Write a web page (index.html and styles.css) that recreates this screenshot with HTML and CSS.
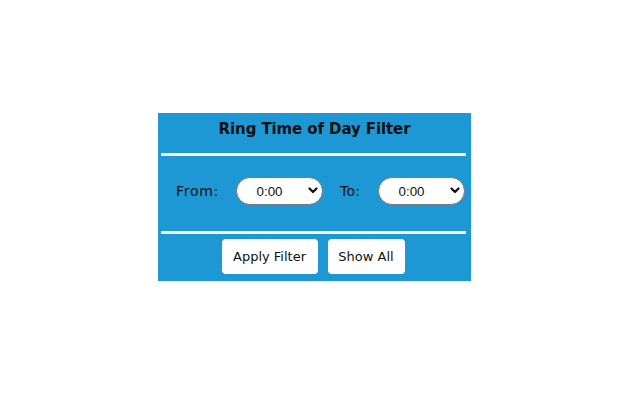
FILE: index.html
```html
<!DOCTYPE html>
<html>
<head>
<meta charset="utf-8">
<link rel="stylesheet" href="styles.css">
</head>
<body>
<div class="page">
  <div class="panel">
    <div class="title">Ring Time of Day Filter</div>
    <div class="rule"></div>
    <div class="row">
      <label class="lbl lbl-from">From:</label>
      <span class="sel-wrap">
        <select class="sel"><option>0:00</option></select>
        <svg class="chev" width="10" height="7" viewBox="0 0 10 7"><path d="M1.5 1.5 L5 5 L8.5 1.5" fill="none" stroke="#111" stroke-width="2.2" stroke-linecap="round" stroke-linejoin="round"/></svg>
      </span>
      <label class="lbl lbl-to">To:</label>
      <span class="sel-wrap">
        <select class="sel"><option>0:00</option></select>
        <svg class="chev" width="10" height="7" viewBox="0 0 10 7"><path d="M1.5 1.5 L5 5 L8.5 1.5" fill="none" stroke="#111" stroke-width="2.2" stroke-linecap="round" stroke-linejoin="round"/></svg>
      </span>
    </div>
    <div class="rule"></div>
    <div class="buttons">
      <button class="btn btn-apply">Apply Filter</button>
      <button class="btn btn-all">Show All</button>
    </div>
  </div>
</div>
</body>
</html>
```

FILE: styles.css
```css
html, body {
  margin: 0;
  padding: 0;
  background: #ffffff;
}

.page {
  padding: 113px 0 0 158px;
}

.panel {
  width: 313px;
  height: 168px;
  box-sizing: border-box;
  background: #1e97d5;
  font-family: "DejaVu Sans", Verdana, sans-serif;
  color: #111111;
  padding-top: 7px;
}

.title {
  font-size: 15px;
  font-weight: bold;
  line-height: 18px;
  text-align: center;
  letter-spacing: -0.1px;
  margin-bottom: 15px;
}

.rule {
  height: 3px;
  background: #ffffff;
  margin: 0 5px 0 3px;
}

.row {
  display: flex;
  align-items: center;
  padding: 21px 0 26px 18px;
}

.lbl {
  font-size: 14px;
  line-height: 16px;
  color: #111111;
  flex: none;
}

.lbl-from {
  width: 60px;
  letter-spacing: 0.7px;
}

.lbl-to {
  width: 38px;
  margin-left: 17px;
  padding-left: 0;
  letter-spacing: 0.3px;
}

.sel-wrap {
  position: relative;
  display: block;
  flex: none;
  width: 87px;
  height: 28px;
}

.sel {
  -webkit-appearance: none;
  appearance: none;
  display: block;
  width: 87px;
  height: 28px;
  box-sizing: border-box;
  border: 1px solid #7a7a7a;
  border-radius: 14px;
  background: #ffffff;
  font-family: "Liberation Sans", Arial, sans-serif;
  font-size: 13.333px;
  color: #111111;
  text-align: center;
  text-align-last: center;
  padding: 0 20px 0 0;
  margin: 0;
  outline: none;
}

.chev {
  position: absolute;
  right: 5px;
  top: 10px;
  pointer-events: none;
}

.buttons {
  display: flex;
  justify-content: center;
  gap: 10px;
  padding: 5px 3px 0 0;
}

.btn {
  font-family: "DejaVu Sans", Verdana, sans-serif;
  font-size: 13px;
  line-height: 15px;
  color: #111111;
  background: #ffffff;
  border: none;
  border-radius: 4px;
  height: 35px;
  padding: 0 10px;
  margin: 0;
}

.btn-apply {
  width: 96px;
}

.btn-all {
  width: 77px;
}
```
